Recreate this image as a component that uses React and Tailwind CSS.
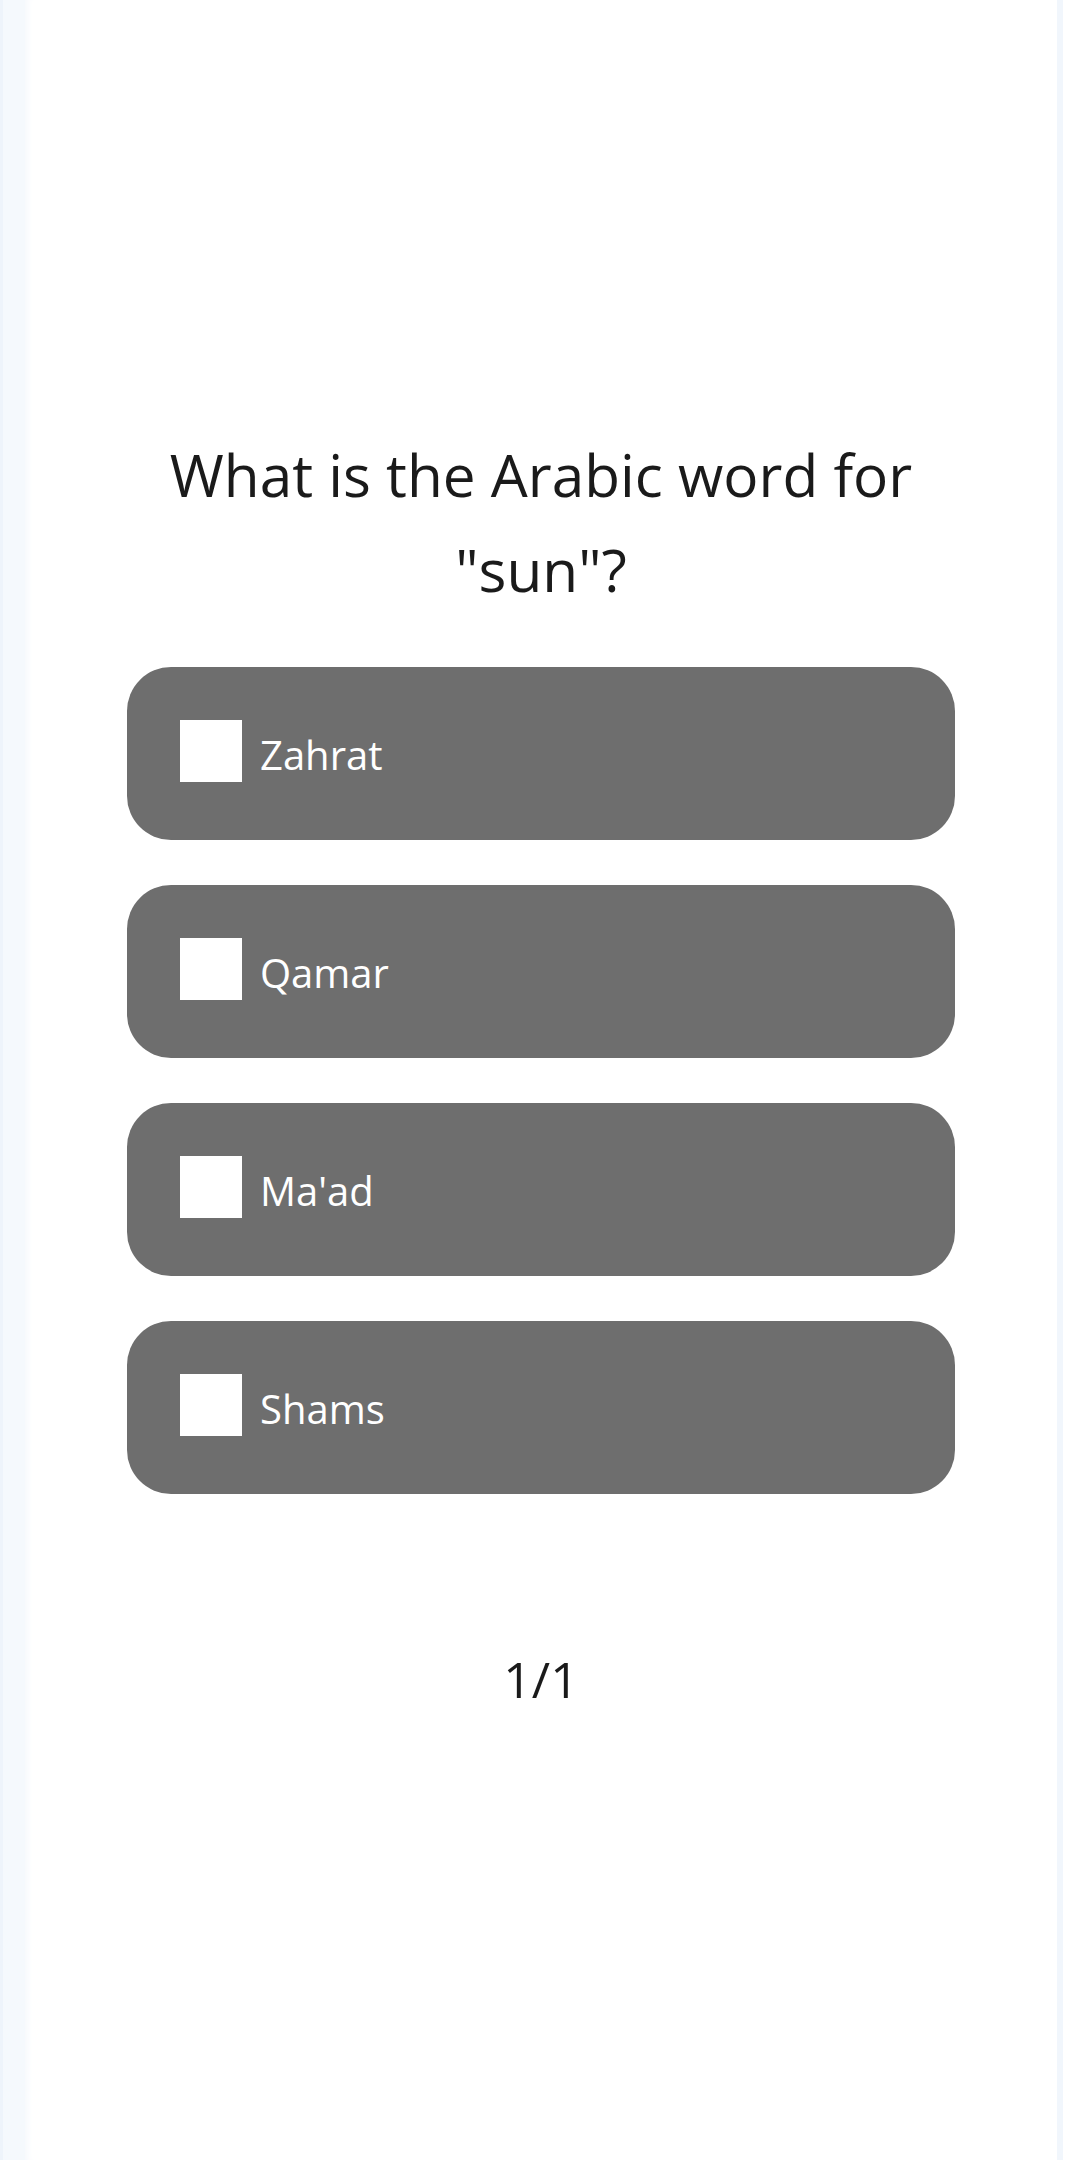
import React from "react";

const options = ["Zahrat", "Qamar", "Ma'ad", "Shams"];

export default function App() {
  return (
    <main
      className="flex min-h-[2160px] w-[1080px] bg-white"
      style={{ fontFamily: '"Open Sans", "Noto Sans", sans-serif' }}
    >
      {/* left gutter */}
      <div className="w-[25px] shrink-0 border-l-[3px] border-[#eef4fb] bg-[#f5f9fd]" />

      {/* quiz panel */}
      <section className="flex w-[1032px] shrink-0 flex-col items-center bg-white pt-[427px] shadow-[inset_7px_0_6px_-4px_#f6f9fd]">
        <h1 className="w-[820px] text-center text-[58.5px] leading-[95px] font-normal text-[#1a1a1a]">
          What is the Arabic word for "sun"?
        </h1>

        <div className="mt-[50px] flex w-[828px] flex-col gap-[45px]">
          {options.map((opt) => (
            <label
              key={opt}
              className="flex h-[173px] items-center gap-[18px] rounded-[44px] bg-[#6e6e6e] pl-[53px]"
            >
              <span className="mb-[5px] h-[62px] w-[62px] shrink-0 bg-white" />
              <span className="mt-[3px] text-[40px] text-white">{opt}</span>
            </label>
          ))}
        </div>

        <p className="mt-[155px] text-[50px] leading-[60px] text-[#1a1a1a]">1/1</p>
      </section>

      {/* right scroll strip */}
      <div className="w-[6px] shrink-0 bg-[#f1f6fc]" />
      <div className="flex-1 bg-white" />
    </main>
  );
}
